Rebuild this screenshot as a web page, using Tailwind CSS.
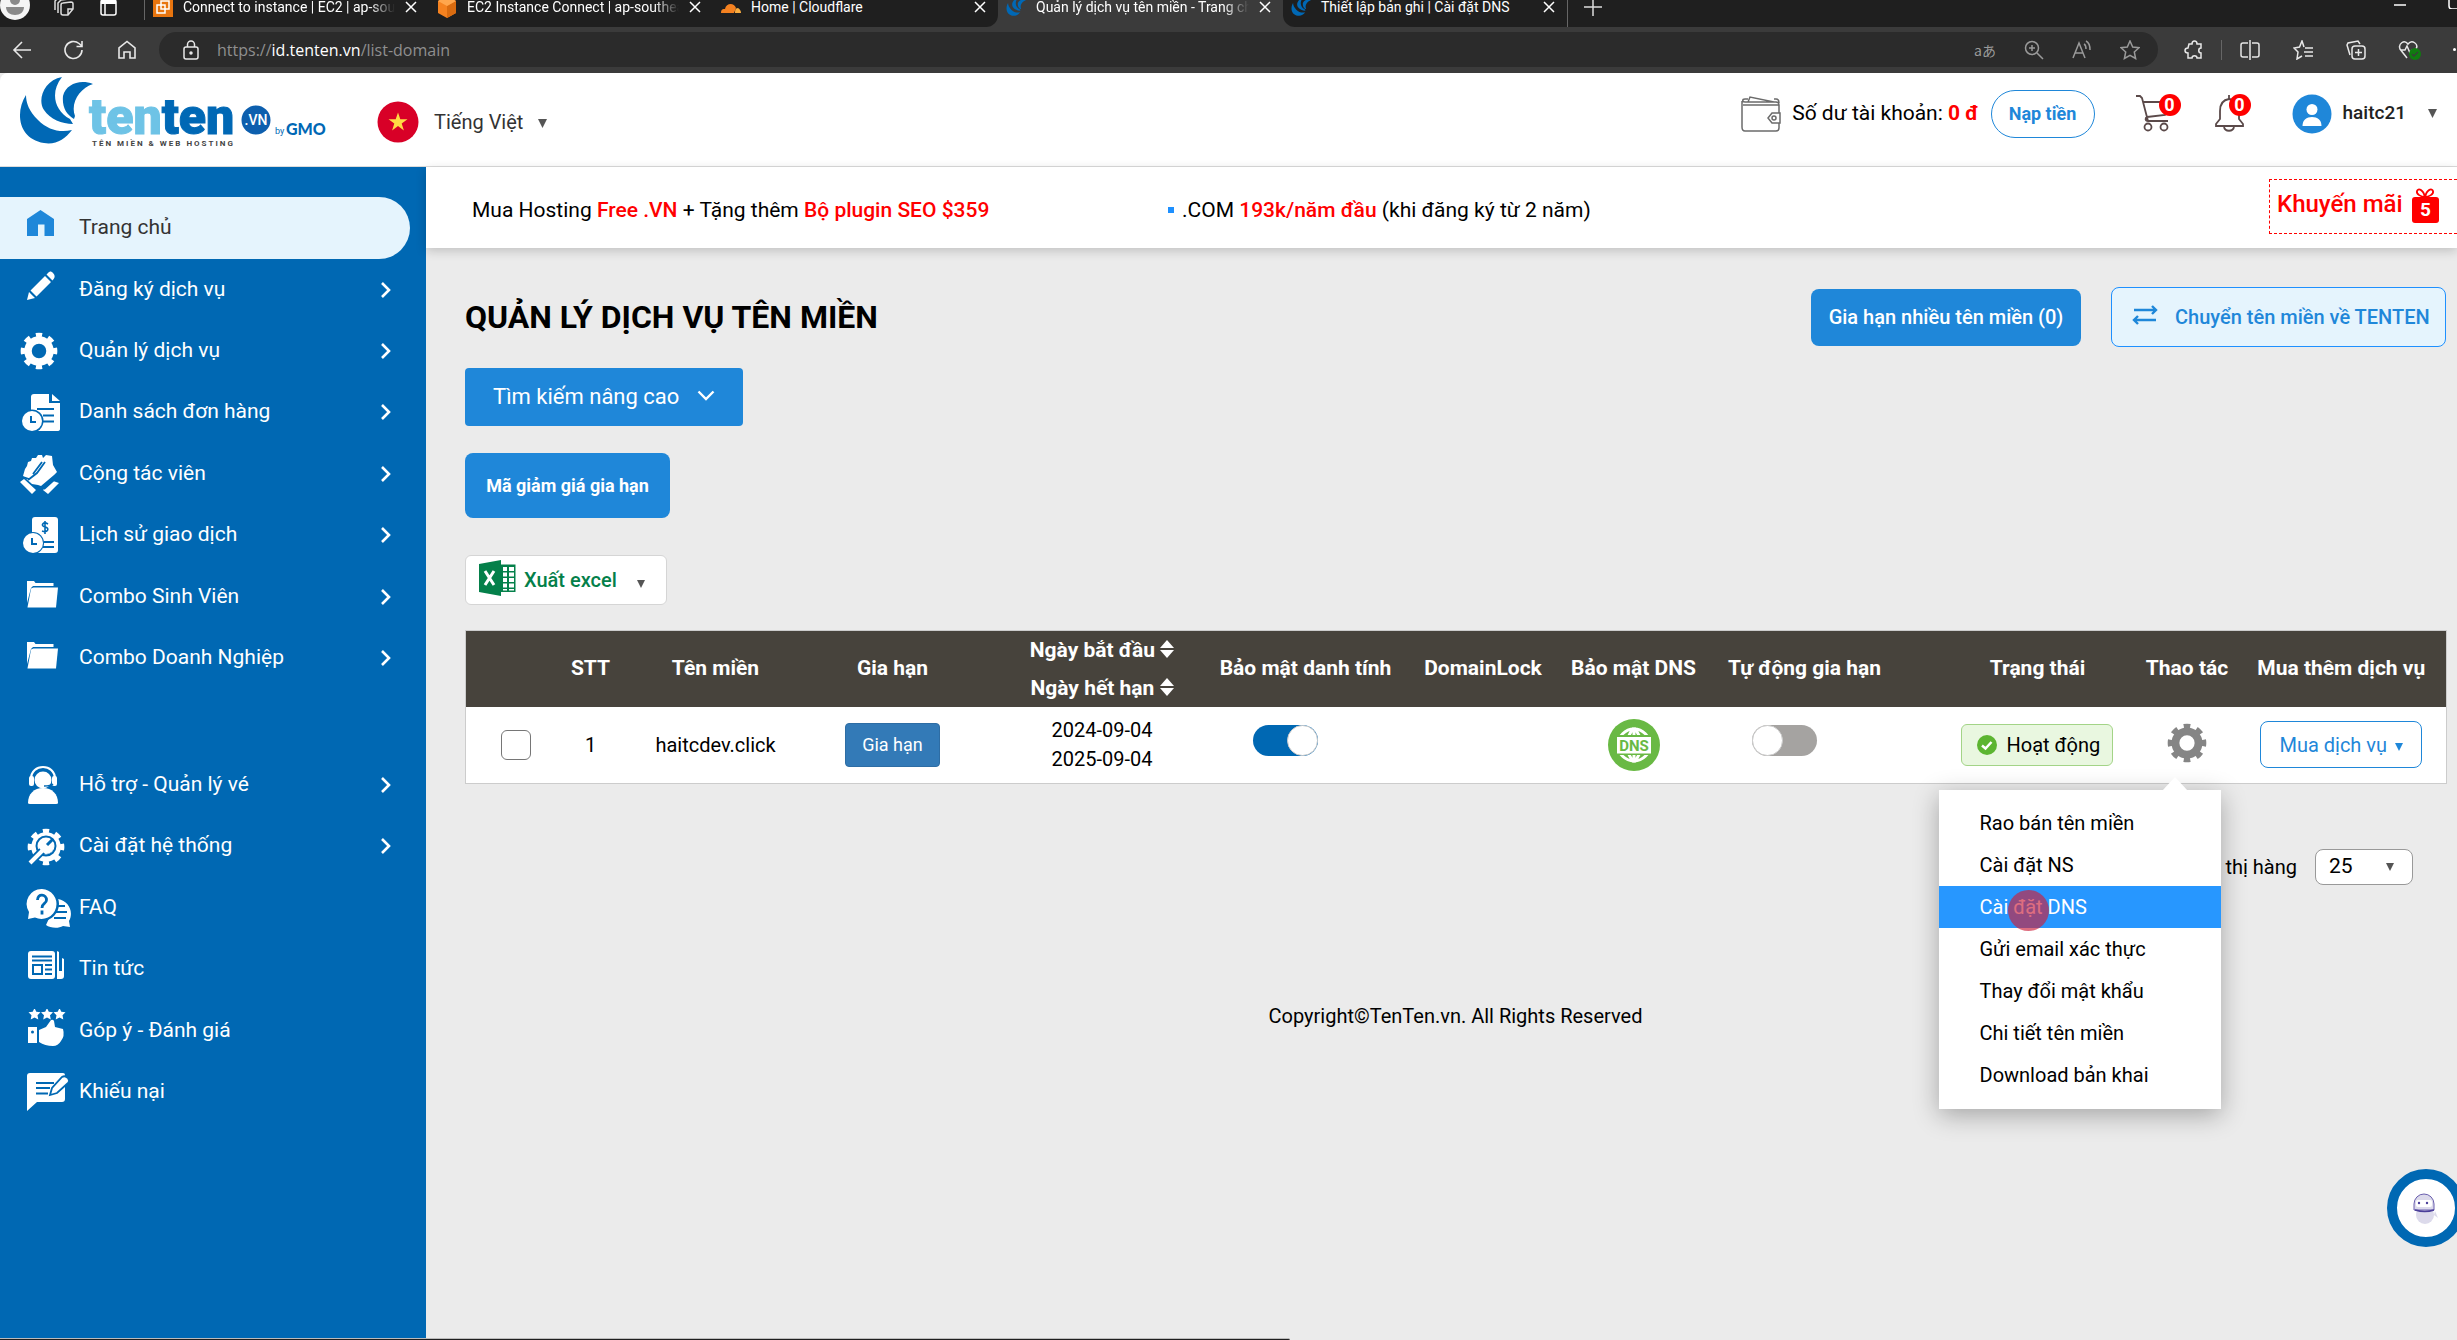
<!DOCTYPE html>
<html lang="vi">
<head>
<meta charset="utf-8">
<title>Quản lý dịch vụ tên miền - Trang chủ</title>
<script src="https://cdn.jsdelivr.net/npm/@tailwindcss/browser@4"></script>
</head>
<body class="flex min-h-screen flex-col overflow-x-hidden bg-[#ebebeb] font-['Roboto',sans-serif] text-xl text-black">

<svg class="hidden" aria-hidden="true">
  <symbol id="chev" viewBox="0 0 12 18"><path d="M2 2l7 7-7 7" fill="none" stroke="currentColor" stroke-width="2.6"/></symbol>
  <symbol id="caret" viewBox="0 0 10 10"><path d="M0 0h10L5 10z" fill="currentColor"/></symbol>
  <symbol id="gear" viewBox="0 0 38 38"><g fill="none" stroke="currentColor"><circle cx="19" cy="19" r="11" stroke-width="7.5"/><circle cx="19" cy="19" r="15.6" stroke-width="5.500" pathLength="16" stroke-dasharray="1 1" stroke-dashoffset=".5"/></g></symbol>
  <symbol id="folder" viewBox="0 0 52 44"><path d="M7 6h7l1.500 2H33.500V11H13L11 13 7 28z" fill="currentColor"/><path d="M13.500 12.500H38L36 32.500H7.500L11 13.500z" fill="currentColor"/></symbol>
  <symbol id="mark" viewBox="18 76 76 68"><path fill="#0068b5" d="M26 95C15 112 18 139 44 143C56 145 65 139 72 130C60 133 48 130 38 120C29 111 26 103 26 95zM62 77C44 80 37 100 44 110C50 119 62 124 73 124L70 119C54 110 50 92 62 77zM93 84C80 79 66 84 63 96C62 107 66 114 74 119L75 116C70 103 80 88 93 84z"/></symbol>
  <symbol id="close" viewBox="0 0 12 12"><path d="M1 1l10 10M11 1L1 11" stroke="currentColor" stroke-width="1.500"/></symbol>
  <symbol id="clock" viewBox="0 0 20 20"><circle cx="10" cy="10" r="10" fill="currentColor"/><path d="M9 5v6h5" fill="none" stroke="#0068b5" stroke-width="2"/></symbol>
  <symbol id="sort" viewBox="0 0 14 18"><path d="M0 8L7 0l7 8zM0 10h14l-7 8z" fill="currentColor"/></symbol>
</svg>

<!-- Browser chrome -->
<div class="bg-[#3b3b3b] text-white">
  <div class="h-[27px] overflow-hidden bg-[#3b3b3b] text-sm">
    <div class="-mt-[13px] flex h-10">
      <div class="flex min-w-0 items-center rounded-br-xl bg-[#1f1f1f]">
        <div class="flex w-[145px] items-center gap-6 border-r border-[#666]">
          <svg class="-mt-1 size-[30px]" viewBox="0 0 30 30"><circle cx="15" cy="15" r="15" fill="#f5f5f5"/><circle cx="15" cy="10" r="5" fill="#8a8a8a"/><path d="M6 17h18c0 5-4 8-9 8s-9-3-9-8z" fill="#8a8a8a"/></svg>
          <svg class="size-5" viewBox="0 0 20 20" fill="none" stroke="#ddd" stroke-width="1.500"><path d="M9 6l8-1q2 0 2 2v5l-5 6H9q-2 0-2-2V8q0-2 2-2zM14 18v-6h5M4 16V6l3-3 8-1M1 13V4l3-3 7-1"/></svg>
          <svg class="size-5" viewBox="0 0 20 20" fill="none" stroke="#fff" stroke-width="1.500"><rect x="3" y="3" width="15" height="15" rx="2"/><path d="M3 5h15" stroke-width="4"/><path d="M7 5v13"/></svg>
        </div>
        <div class="flex h-10 w-[284px] items-center gap-[10px] pl-2 pr-3">
          <svg class="size-5 shrink-0" viewBox="0 0 20 20"><path d="M0 0h20v20H0z" fill="#e8750f"/><g fill="none" stroke="#fff" stroke-width="1.500"><rect x="4" y="8" width="8" height="8"/><rect x="8" y="4" width="8" height="8"/></g></svg>
          <span class="min-w-0 flex-1 overflow-hidden whitespace-nowrap [mask-image:linear-gradient(90deg,#000_88%,transparent)]">Connect to instance | EC2 | ap-southeast</span>
          <svg class="size-3 shrink-0"><use href="#close"/></svg>
        </div>
        <div class="flex h-10 w-[284px] items-center gap-[10px] pl-2 pr-3">
          <svg class="h-6 w-5 shrink-0" viewBox="0 0 20 24"><path d="M10 1l9 5v12l-9 5-9-5V6z" fill="#f58220"/><path d="M10 11v12l9-5V6z" fill="#d96b10"/><path d="M10 1l9 5-9 5-9-5z" fill="#ffa64d"/></svg>
          <span class="min-w-0 flex-1 overflow-hidden whitespace-nowrap [mask-image:linear-gradient(90deg,#000_88%,transparent)]">EC2 Instance Connect | ap-southeast-1</span>
          <svg class="size-3 shrink-0"><use href="#close"/></svg>
        </div>
        <div class="flex h-10 w-[285px] items-center gap-[10px] pl-2 pr-3">
          <svg class="h-4 w-5 shrink-0" viewBox="0 0 20 16"><path d="M0 14c0-4 2-4 4-4 1-6 9-7 11-1l-2 5z" fill="#f48120"/><path d="M14 14c0-2 0-5 3-5 2 1 3 3 3 5z" fill="#faad3f"/></svg>
          <span class="flex-1 whitespace-nowrap">Home | Cloudflare</span>
          <svg class="size-3 shrink-0"><use href="#close"/></svg>
        </div>
      </div>
      <div class="flex w-[285px] items-center gap-[10px] bg-[#3b3b3b] pl-2 pr-3">
        <svg class="size-5 shrink-0"><use href="#mark"/></svg>
        <span class="min-w-0 flex-1 overflow-hidden whitespace-nowrap [mask-image:linear-gradient(90deg,#000_88%,transparent)]">Quản lý dịch vụ tên miền - Trang chủ</span>
        <svg class="size-3 shrink-0"><use href="#close"/></svg>
      </div>
      <div class="flex min-w-0 flex-1 items-center rounded-bl-xl bg-[#1f1f1f]">
        <div class="flex h-10 w-[285px] shrink-0 items-center gap-[10px] border-r border-[#666] pl-2 pr-3">
          <svg class="size-5 shrink-0"><use href="#mark"/></svg>
          <span class="flex-1 whitespace-nowrap">Thiết lập bản ghi | Cài đặt DNS</span>
          <svg class="size-3 shrink-0"><use href="#close"/></svg>
        </div>
        <svg class="ml-4 size-[18px]" viewBox="0 0 18 18"><path d="M9 0v18M0 9h18" stroke="#ddd" stroke-width="1.500"/></svg>
        <svg class="mb-2 ml-auto h-3 w-[63px]" viewBox="0 0 63 12"><path d="M0 8h12" stroke="#fff" stroke-width="1.500"/><path d="M55 0v9q0 3 3 3h5" fill="none" stroke="#fff" stroke-width="1.500"/></svg>
      </div>
    </div>
  </div>
  <div class="flex h-[46px] items-center pb-px font-['Open_Sans','Noto_Sans',sans-serif] text-base">
    <svg class="ml-3 h-5 w-5" viewBox="0 0 20 20" fill="none" stroke="#e8e8e8" stroke-width="1.600"><path d="M19 10H2M10 2l-8 8 8 8"/></svg>
    <svg class="ml-8 h-5 w-5" viewBox="0 0 20 20" fill="none" stroke="#e8e8e8" stroke-width="1.600"><path d="M18 10a8.500 8.500 0 1 1-3-6.500L18 6M18 1v5.500h-5.500"/></svg>
    <svg class="ml-[33px] h-5 w-5" viewBox="0 0 20 20" fill="none" stroke="#e8e8e8" stroke-width="1.600"><path d="M2 18V8l8-6.500L18 8v10h-5v-6H7v6z"/></svg>
    <div class="ml-[22px] flex h-[35px] min-w-0 flex-1 items-center rounded-full bg-[#2b2b2b] pl-[22px] pr-[18px]">
      <svg class="size-5" viewBox="0 0 20 20" fill="none" stroke="#e8e8e8" stroke-width="1.500"><rect x="3" y="7" width="14" height="12" rx="2"/><path d="M6.500 7V4.500a3.500 3.500 0 0 1 7 0V7"/><circle cx="10" cy="13" r="1" fill="#e8e8e8"/></svg>
      <a href="#" class="ml-4 text-[#8f8f8f]">https://<span class="text-white">id.tenten.vn</span>/list-domain</a>
      <div class="ml-auto flex items-center gap-7 text-[#9a9a9a]">
        <span class="font-['Noto_Sans_CJK_JP',sans-serif] text-sm leading-5">aあ</span>
        <svg class="size-5" viewBox="0 0 20 20" fill="none" stroke="currentColor" stroke-width="1.500"><circle cx="8" cy="8" r="6.500"/><path d="M13 13l6 6M8 5v6M5 8h6"/></svg>
        <svg class="size-5" viewBox="0 0 20 20" fill="none" stroke="currentColor" stroke-width="1.500"><path d="M1 18L7 3l6 15M3 13h8M12 4c2 1 2 3 2 5M14 1c4 2 4 6 4 9"/></svg>
        <svg class="size-5" viewBox="0 0 20 20" fill="none" stroke="currentColor" stroke-width="1.500"><path d="M10 1l2.700 6 6.300.7-4.700 4.300 1.300 6.500L10 15.300l-5.600 3.200 1.300-6.500L1 7.700 7.300 7z"/></svg>
      </div>
    </div>
    <div class="ml-[26px] flex items-center text-[#e8e8e8]">
      <svg class="size-5" viewBox="0 0 20 20" fill="none" stroke="currentColor" stroke-width="1.500"><path d="M5 4h3c0-4 5-4 5 0h4v4c-3 0-3 5 0 5v5h-4c0-3-5-3-5 0H4v-5c-4 0-4-5 0-5z"/></svg>
      <span class="ml-[17px] h-5 w-px bg-[#666]"></span>
      <svg class="ml-[18px] size-5" viewBox="0 0 20 20" fill="none" stroke="currentColor" stroke-width="1.500"><path d="M8 3H3a2 2 0 0 0-2 2v10a2 2 0 0 0 2 2h5M12 3h5a2 2 0 0 1 2 2v10a2 2 0 0 1-2 2h-5M10 0v20"/></svg>
      <svg class="ml-[33px] size-5" viewBox="0 0 20 20" fill="none" stroke="currentColor" stroke-width="1.500"><path d="M11 7L9 1 6.500 7 1 8l4 4-1 7 5-3M12 8h8M11 12h9M12 16h8"/></svg>
      <svg class="ml-[33px] size-5" viewBox="0 0 20 20" fill="none" stroke="currentColor" stroke-width="1.500"><rect x="6" y="6" width="13" height="13" rx="3"/><path d="M12.500 9v7M9 12.500h7M4 15L1 5l1-2 10-2 2 3"/></svg>
      <svg class="ml-[32px] h-5 w-6" viewBox="0 0 24 20"><path d="M9 18L2 9C0 4 6-1 10 4c4-5 11 0 8 5M3 10h4l2-4 3 7 2-3" fill="none" stroke="currentColor" stroke-width="1.500"/><circle cx="17" cy="14" r="6" fill="#107c10"/><path d="M14 14l2 2 4-4" fill="none" stroke="#3b3b3b" stroke-width="1.300"/></svg>
      <span class="ml-[31px] mr-px size-[3px] rounded-full bg-white"></span>
    </div>
  </div>
</div>

<!-- Site header -->
<header class="flex h-[94px] items-center rounded-tl-lg border-b border-[#dcdcdc] bg-white pl-[19px] pr-5">
  <a href="#" aria-label="tenten.vn by GMO" class="pb-4">
    <svg class="h-[74px] w-[312px]" viewBox="19 75 312 74">
      <use href="#mark" x="18" y="76" width="76" height="68"/>
      <text x="89" y="134" font-size="50" font-family="Roboto, sans-serif" font-weight="900" fill="#6ec3e6" stroke="#6ec3e6">ten<tspan fill="#0068b5" stroke="#0068b5">ten</tspan></text>
      <circle cx="256" cy="120" r="14.500" fill="#0d5fae"/>
      <text x="256" y="125" font-size="14" text-anchor="middle" fill="#fff" font-family="Roboto, sans-serif" font-weight="500">.VN</text>
      <text x="275" y="134" font-size="9" fill="#0068b5" font-family="Roboto, sans-serif">by</text>
      <text x="286" y="135" font-size="16" fill="#0068b5" font-family="Lato, sans-serif" font-weight="900">GMO</text>
      <text x="92" y="146" font-size="8" letter-spacing="2" fill="#444" font-family="Roboto, sans-serif" font-weight="700">TÊN MIỀN &amp; WEB HOSTING</text>
    </svg>
  </a>
  <button type="button" class="ml-[46px] mt-1 flex items-center text-[#333]">
    <svg class="size-[42px]" viewBox="0 0 42 42"><circle cx="21" cy="21" r="20.500" fill="#d80027"/><path d="M21 11.500l2.300 6.800h7.200l-5.800 4.200 2.200 6.900-5.900-4.300-5.900 4.300 2.200-6.900-5.800-4.200h7.200z" fill="#ffda44"/></svg>
    <span class="ml-[15px]">Tiếng Việt</span>
    <svg class="ml-[15px] mt-1 h-[9px] w-[9px] text-[#555]"><use href="#caret"/></svg>
  </button>
  <div class="ml-auto flex items-center pb-3">
    <svg class="h-9 w-10" viewBox="0 0 40 36" fill="none" stroke="#6b6b6b" stroke-width="1.500"><path d="M1 5v26c0 3 1 4 3 4h31c2 0 3-1 3-3V9c0-2-1-3-3-3H4C1 6 1 3 4 3h3M2 9h36M7 6L9 1l24 5M33 3h2c2 0 3 2 3 4"/><path d="M39 17H31l-4 5 4 5h8z" fill="#fff"/><circle cx="33" cy="22" r="2"/></svg>
    <span class="ml-[11px] whitespace-nowrap text-[21px]">Số dư tài khoản: <b class="font-bold text-[#f00]">0 đ</b></span>
    <button type="button" class="ml-3 h-12 w-[104px] rounded-full border border-[#1f87d9] text-lg font-bold text-[#1f87d9]">Nạp tiền</button>
    <a href="#" aria-label="Giỏ hàng" class="relative ml-10 block w-[46px]">
      <svg class="h-[37px] w-[38px]" viewBox="0 0 38 37" fill="none" stroke="#5b4a4a" stroke-width="1.800"><path d="M1 1h4l2 2 6 23h20M8 7h26l-4 13-18 2M13 26c-3 0-3-3-1-4"/><circle cx="13" cy="32" r="3.500"/><circle cx="29" cy="32" r="3.500"/></svg>
      <span class="absolute -top-px right-0 grid size-[22px] place-items-center rounded-full bg-[#f00] text-lg leading-5 font-bold text-white">0</span>
    </a>
    <a href="#" aria-label="Thông báo" class="relative ml-[34px] block w-9">
      <svg class="h-[37px] w-[30px]" viewBox="0 0 30 37" fill="none" stroke="#5b4a4a" stroke-width="1.800"><path d="M14 0v4C7 5 5 10 5 16v8l-4 5v2h27v-2l-4-5v-8c0-6-2-11-10-12M9 32c1 5 9 5 10 0"/></svg>
      <span class="absolute -top-px right-0 grid size-[22px] place-items-center rounded-full bg-[#f00] text-lg leading-5 font-bold text-white">0</span>
    </a>
    <button type="button" class="ml-[41px] flex items-center">
      <svg class="size-10" viewBox="0 0 40 40"><circle cx="20" cy="20" r="19.500" fill="#1f87d9"/><circle cx="20" cy="15.500" r="5.500" fill="#fff"/><path d="M10.500 32c0-6 4-9 9.500-9s9.500 3 9.500 9z" fill="#fff"/></svg>
      <span class="ml-[11px] text-[19px] font-medium text-[#222]">haitc21</span>
      <svg class="ml-[22px] size-[9px] text-[#555]"><use href="#caret"/></svg>
    </button>
  </div>
</header>

<div class="flex flex-1">
  <!-- Sidebar -->
  <nav class="w-[426px] shrink-0 bg-[#0068b3] pt-[30px] text-[21px] text-white">
    <ul>
      <li class="h-[62px]"><a href="#" class="mr-4 flex h-full items-center rounded-r-full bg-[#e5f4fd] pl-5 text-[#333]"><svg class="mr-[7px] h-11 w-[52px]" viewBox="0 0 52 44"><path d="M20.500 4L34 13v17h-9.500V18.500h-6.500V30H7V13z" fill="#1f87d9"/></svg>Trang chủ</a></li>
      <li class="h-[61px]"><a href="#" class="flex h-full items-center pl-5 pr-[34px]"><svg class="mr-[7px] h-11 w-[52px]" viewBox="0 0 52 44" fill="currentColor"><path d="M7 32l2-8 6 6zM10.500 22.500L25 8l6 6-14.500 14.500zM26.500 6.500L28 5c2-2 3-2 5 0s2 4 1 5.500L32.500 12.500z"/></svg>Đăng ký dịch vụ<svg class="ml-auto h-[18px] w-3"><use href="#chev"/></svg></a></li>
      <li class="h-[61px]"><a href="#" class="flex h-full items-center pl-5 pr-[34px]"><svg class="mr-[7px] h-11 w-[52px]" viewBox="0 0 52 44"><use href="#gear" x="0" y="3" width="38" height="38"/></svg>Quản lý dịch vụ<svg class="ml-auto h-[18px] w-3"><use href="#chev"/></svg></a></li>
      <li class="h-[62px]"><a href="#" class="flex h-full items-center pl-5 pr-[34px]"><svg class="mr-[7px] h-11 w-[52px]" viewBox="0 0 52 44"><path d="M11 7q0-3 3-3h15v9h11v26q0 2-3 2H11zM32 4l8 7h-8z" fill="currentColor"/><path d="M17 19h17M23 25.500h11M22 31.500h12" stroke="#0068b3" stroke-width="1.800"/><circle cx="12" cy="31" r="11.500" fill="#0068b3"/><use href="#clock" x="2" y="21" width="20" height="20"/></svg>Danh sách đơn hàng<svg class="ml-auto h-[18px] w-3"><use href="#chev"/></svg></a></li>
      <li class="h-[61px]"><a href="#" class="flex h-full items-center pl-5 pr-[34px]"><svg class="mr-[7px] h-11 w-[52px]" viewBox="0 0 52 44" fill="currentColor"><path d="M0 30l4-3 12 11-4 4zM23 38l10-9 6 2-11 11zM3 24l2-7 2-3 1-4 3-1 1-3 4 0 2-3 4 0 1 3 3-3 6 1 1 9 4 7-3 3-13 11-3-1-6-1z"/><path d="M8 28l9-7 8-11M3 25l6 2M24 37l11-10M13 22l9-12" fill="none" stroke="#0068b3" stroke-width="1.800"/></svg>Cộng tác viên<svg class="ml-auto h-[18px] w-3"><use href="#chev"/></svg></a></li>
      <li class="h-[62px]"><a href="#" class="flex h-full items-center pl-5 pr-[34px]"><svg class="mr-[7px] h-11 w-[52px]" viewBox="0 0 52 44"><rect x="12" y="4" width="26" height="36" rx="3" fill="currentColor"/><path d="M25 8v13M28 11c-5-3-8 2-3 3s3 6-3 4" fill="none" stroke="#0068b3" stroke-width="1.600"/><path d="M24 29h10M23 34h11" stroke="#0068b3" stroke-width="1.800"/><circle cx="13" cy="30" r="11" fill="#0068b3"/><use href="#clock" x="3" y="20" width="20" height="20"/></svg>Lịch sử giao dịch<svg class="ml-auto h-[18px] w-3"><use href="#chev"/></svg></a></li>
      <li class="h-[61px]"><a href="#" class="flex h-full items-center pl-5 pr-[34px]"><svg class="mr-[7px] h-11 w-[52px]"><use href="#folder"/></svg>Combo Sinh Viên<svg class="ml-auto h-[18px] w-3"><use href="#chev"/></svg></a></li>
      <li class="h-[62px]"><a href="#" class="flex h-full items-center pl-5 pr-[34px]"><svg class="mr-[7px] h-11 w-[52px]"><use href="#folder"/></svg>Combo Doanh Nghiệp<svg class="ml-auto h-[18px] w-3"><use href="#chev"/></svg></a></li>
    </ul>
    <ul class="mt-[65px]">
      <li class="h-[61px]"><a href="#" class="flex h-full items-center pl-5 pr-[34px]"><svg class="mr-[7px] h-11 w-[52px]" viewBox="0 0 52 44"><path d="M8 40c0-9 6-15 15-15s15 6 15 15q0 1-2 1H10q-2 0-2-1z" fill="currentColor"/><circle cx="23" cy="17" r="8.500" fill="currentColor"/><path d="M11 16c0-16 24-16 24 0" fill="none" stroke="currentColor" stroke-width="2.200"/><rect x="9" y="13" width="5" height="10" rx="2" fill="currentColor"/><rect x="32" y="13" width="5" height="10" rx="2" fill="currentColor"/><path d="M33 21c-2 2-4 2-9 2" fill="none" stroke="#0068b3" stroke-width="1.500"/></svg>Hỗ trợ - Quản lý vé<svg class="ml-auto h-[18px] w-3"><use href="#chev"/></svg></a></li>
      <li class="h-[62px]"><a href="#" class="flex h-full items-center pl-5 pr-[34px]"><svg class="mr-[7px] h-11 w-[52px]" viewBox="0 0 52 44"><use href="#gear" x="7" y="4" width="38" height="38"/><circle cx="26" cy="22" r="8" fill="currentColor"/><circle cx="26" cy="22" r="9.500" fill="none" stroke="#0068b3" stroke-width="2"/><path d="M10 39l12-12" stroke="#0068b3" stroke-width="8"/><path d="M10 39l15-15" stroke="currentColor" stroke-width="4"/><path d="M27 21l6-6" stroke="#0068b3" stroke-width="3"/></svg>Cài đặt hệ thống<svg class="ml-auto h-[18px] w-3"><use href="#chev"/></svg></a></li>
      <li class="h-[61px]"><a href="#" class="flex h-full items-center pl-5 pr-[34px]"><svg class="mr-[7px] h-11 w-[52px]" viewBox="0 0 52 44"><path d="M26 39c4 3 12 4 17 1l7 1-1-6c5-9 0-20-11-22z" fill="currentColor"/><path d="M36 20h9M36 26h11M34 32h12" stroke="#0068b3" stroke-width="2"/><circle cx="22" cy="18" r="17" fill="#0068b3"/><path d="M22 3a15 15 0 1 1-7 28.500L8 33l1-7A15 15 0 0 1 22 3z" fill="currentColor"/><path d="M17.500 14c0-7 9-6 9 0 0 4-4.500 3-4.500 8M22 24.500v4" fill="none" stroke="#0068b3" stroke-width="2.800"/></svg>FAQ</a></li>
      <li class="h-[62px]"><a href="#" class="flex h-full items-center pl-5 pr-[34px]"><svg class="mr-[7px] h-11 w-[52px]" viewBox="0 0 52 44"><rect x="8" y="4" width="27" height="28" rx="3" fill="currentColor"/><path d="M37 4l2 1v19h3V11l2 1v17q0 3-3 3h-4z" fill="currentColor"/><path d="M12 9.500h20M12 13.500h20M25 18h7M25 22.500h7M25 27h7" stroke="#0068b3" stroke-width="1.800"/><rect x="13" y="18" width="9" height="9" fill="none" stroke="#0068b3" stroke-width="2"/></svg>Tin tức</a></li>
      <li class="h-[61px]"><a href="#" class="flex h-full items-center pl-5 pr-[34px]"><svg class="mr-[7px] h-11 w-[52px]" viewBox="0 0 52 44" fill="currentColor"><path id="st" d="M14.500-1l1.800 3.800 4.200.5-3 3 .8 4.200-3.800-2-3.800 2 .8-4.200-3-3 4.200-.5z"/><use href="#st" x="12.500"/><use href="#st" x="25"/><path d="M8 18h9v16H8zM19 21l7-3 5-7q2-1 3 1l1 6 8 2q2 7-2 12-3 5-8 5-8 0-14-4z"/><circle cx="12.500" cy="23" r="1.500" fill="#0068b3"/></svg>Góp ý - Đánh giá</a></li>
      <li class="h-[62px]"><a href="#" class="flex h-full items-center pl-5 pr-[34px]"><svg class="mr-[7px] h-11 w-[52px]" viewBox="0 0 52 44"><path d="M7 6q0-3 3-3h33q2 0 2 2v24q0 3-3 3H17L7 41z" fill="currentColor"/><path d="M16 13h18M16 18h14M16 23.500h12" stroke="#0068b3" stroke-width="1.800"/><path d="M30 25l2-7L42 7q3-2 6 1 2 3 0 5L37 23z" fill="currentColor" stroke="#0068b3" stroke-width="1.800"/></svg>Khiếu nại</a></li>
    </ul>
  </nav>

  <div class="flex min-w-0 flex-1 flex-col">
    <!-- Promotions -->
    <div class="flex h-[81px] shrink-0 items-start bg-white pl-[46px] text-[21px] leading-7 shadow-[0_3px_10px_rgba(0,0,0,0.18)]">
      <p class="mt-[29px] w-[696px]">Mua Hosting <b class="font-medium text-[#f00]">Free .VN</b> + Tặng thêm <b class="font-medium text-[#f00]">Bộ plugin SEO $359</b></p>
      <p class="mt-[29px] flex items-center whitespace-pre"><span class="mr-2 size-[6px] bg-[#1e90ff]"></span>.COM <b class="font-medium text-[#f00]">193k/năm đầu</b> (khi đăng ký từ 2 năm)</p>
      <a href="#" class="ml-auto mt-3 flex h-[55px] w-[188px] items-start border border-r-0 border-dashed border-[#f00] pl-[7px] pt-2 text-2xl leading-8 font-medium text-[#f00]">Khuyến mãi
        <svg class="ml-[9px] h-9 w-[27px]" viewBox="0 0 27 36"><path d="M13 9C9 9 4 6 5 3s6-2 8 6c2-8 7-9 8-6s-4 6-8 6z" fill="none" stroke="#f00" stroke-width="1.800"/><rect y="9" width="27" height="26" rx="3" fill="#f00"/><text x="13.500" y="28" text-anchor="middle" font-size="19" font-weight="700" fill="#fff">5</text></svg>
      </a>
    </div>

    <main class="flex-1 pb-6 pl-[39px] pr-[11px] pt-[39px]">
      <div class="flex items-center">
        <h1 class="text-[32px] leading-[60px] font-bold">QUẢN LÝ DỊCH VỤ TÊN MIỀN</h1>
        <button type="button" class="ml-auto h-[57px] w-[270px] rounded-lg bg-[#1f87d9] font-medium text-white">Gia hạn nhiều tên miền (0)</button>
        <button type="button" class="ml-[30px] flex h-[60px] w-[335px] items-center whitespace-nowrap rounded-lg border border-[#1e90ff] bg-[#e5f4fd] pl-5 font-medium text-[#1f87d9]">
          <svg class="mb-1 mr-[17px] h-5 w-[26px]" viewBox="0 0 26 20" fill="none" stroke="currentColor" stroke-width="2.400"><path d="M2 5h22M20 1l4 4-4 4M24 15H2M6 11l-4 4 4 4"/></svg>Chuyển tên miền về TENTEN
        </button>
      </div>
      <button type="button" class="mt-[21px] flex h-[58px] w-[278px] items-center rounded bg-[#1f87d9] pl-7 text-[22px] text-white">Tìm kiếm nâng cao
        <svg class="mb-1 ml-[18px] h-[11px] w-[18px]" viewBox="0 0 18 11"><path d="M1.500 1.500L9 9l7.500-7.500" fill="none" stroke="currentColor" stroke-width="2.400"/></svg>
      </button>
      <button type="button" class="mt-[27px] block h-[65px] w-[205px] rounded-lg bg-[#1f87d9] text-lg font-bold text-white">Mã giảm giá gia hạn</button>
      <button type="button" class="mt-[37px] flex h-[50px] w-[202px] items-center rounded-md border border-[#d5d5d5] bg-white pl-[13px] font-medium text-[#04804a]">
        <svg class="mb-1 h-[36px] w-[37px]" viewBox="0 0 37 36"><path d="M22 4.500h14.500V32H22z" fill="#04804a"/><path d="M24 7h4v4h-4zM30 7h5v4h-5zM24 12.500h4v4h-4zM30 12.500h5v4h-5zM24 18h4v4h-4zM30 18h5v4h-5zM24 23.500h4v4h-4zM30 23.500h5v4h-5zM24 29h4v1.500h-4zM30 29h5v1.500h-5z" fill="#fff"/><path d="M0 4l22-4v36L0 32z" fill="#04804a"/><path d="M6 11l9 14M15 11L6 25" stroke="#fff" stroke-width="3"/></svg>
        <span class="ml-2">Xuất excel</span>
        <svg class="ml-5 mt-2 size-2 text-[#555]"><use href="#caret"/></svg>
      </button>

      <table class="mt-[25px] w-full table-fixed border border-[#ccc] bg-white text-center">
        <colgroup><col class="w-[90px]"><col class="w-[70px]"><col class="w-[180px]"><col class="w-[174px]"><col class="w-[233px]"><col class="w-[186px]"><col class="w-[165px]"><col class="w-[140px]"><col class="w-[202px]"><col class="w-[232px]"><col class="w-[99px]"><col class="w-[210px]"></colgroup>
        <thead class="bg-[#47433c] text-[21px] text-white">
          <tr class="h-[76px] whitespace-nowrap [&>th]:font-bold">
            <th></th><th>STT</th><th>Tên miền</th><th>Gia hạn</th>
            <th class="pl-3 leading-[38px]">Ngày bắt đầu <svg class="-mt-1 inline h-[18px] w-[14px]"><use href="#sort"/></svg><br>Ngày hết hạn <svg class="-mt-1 inline h-[18px] w-[14px]"><use href="#sort"/></svg></th>
            <th>Bảo mật danh tính</th><th class="pl-1">DomainLock</th><th>Bảo mật DNS</th><th>Tự động gia hạn</th><th class="pl-8">Trạng thái</th><th>Thao tác</th><th>Mua thêm dịch vụ</th>
          </tr>
        </thead>
        <tbody>
          <tr class="h-[76px]">
            <td class="pl-[10px]"><input type="checkbox" aria-label="Chọn haitcdev.click" class="mx-auto block size-[30px] appearance-none rounded-md border border-[#767676] bg-white"></td>
            <td>1</td>
            <td>haitcdev.click</td>
            <td><button type="button" class="h-11 w-[95px] rounded border border-[#2e6da4] bg-[#337ab7] text-lg text-white">Gia hạn</button></td>
            <td class="pl-3 leading-[29px]">2024-09-04<br>2025-09-04</td>
            <td class="pb-2 pr-10"><label class="relative mx-auto block h-[31px] w-[65px]"><input type="checkbox" checked aria-label="Bảo mật danh tính" class="peer block h-full w-full appearance-none rounded-full bg-[#a5a3a1] checked:bg-[#0068b3]"><span class="absolute left-0 top-0 size-[31px] rounded-full border border-[#ccc] bg-white peer-checked:left-auto peer-checked:right-0"></span></label></td>
            <td></td>
            <td><svg class="mx-auto size-[52px]" viewBox="0 0 52 52"><circle cx="26" cy="26" r="26" fill="#69b944"/><g fill="none" stroke="#fff" stroke-width="3"><circle cx="26" cy="26" r="16"/><path d="M26 9c-9 9-9 25 0 34M26 9c9 9 9 25 0 34M26 9v34"/></g><rect x="7" y="16" width="38" height="20" fill="#69b944"/><rect x="9" y="18" width="34" height="16.500" fill="#fff"/><text x="26" y="32" text-anchor="middle" font-size="15" font-weight="700" fill="#69b944">DNS</text></svg></td>
            <td class="pb-2 pr-10"><label class="relative mx-auto block h-[31px] w-[65px]"><input type="checkbox" aria-label="Tự động gia hạn" class="peer block h-full w-full appearance-none rounded-full bg-[#a5a3a1] checked:bg-[#0068b3]"><span class="absolute left-0 top-0 size-[31px] rounded-full border border-[#ccc] bg-white peer-checked:left-auto peer-checked:right-0"></span></label></td>
            <td class="pl-[30px]"><span class="mx-auto flex h-[42px] w-[152px] items-center whitespace-nowrap rounded-md border border-[#a3d487] bg-[#e9f7e0] pl-[15px]"><svg class="mr-[10px] size-5 shrink-0" viewBox="0 0 20 20"><circle cx="10" cy="10" r="10" fill="#5cb531"/><path d="M5 10.500l3.500 3 6-6.500" fill="none" stroke="#fff" stroke-width="2.500"/></svg>Hoạt động</span></td>
            <td class="relative pb-1">
              <button type="button" aria-label="Thao tác" class="mx-auto block text-[#858585]"><svg class="size-10"><use href="#gear"/></svg></button>
              <div class="absolute right-4 top-[83px] z-10 w-[282px] bg-white pt-3 pb-[13px] text-left shadow-[0_6px_24px_rgba(0,0,0,0.3)]">
                <svg class="absolute right-[33px] -top-[13px] h-[14px] w-[26px]" viewBox="0 0 26 14"><path d="M0 14L13 0l13 14z" fill="#fff"/></svg>
                <ul class="whitespace-nowrap leading-[42px] [&_a]:block [&_a]:pl-[41px]">
                  <li><a href="#">Rao bán tên miền</a></li>
                  <li><a href="#">Cài đặt NS</a></li>
                  <li class="relative bg-[#2797ff] text-white"><a href="#">Cài đặt DNS</a><span class="absolute left-[69px] top-1 size-[41px] rounded-full bg-[#cc1f3a]/65"></span></li>
                  <li><a href="#">Gửi email xác thực</a></li>
                  <li><a href="#">Thay đổi mật khẩu</a></li>
                  <li><a href="#">Chi tiết tên miền</a></li>
                  <li><a href="#">Download bản khai</a></li>
                </ul>
              </div>
            </td>
            <td><button type="button" class="mx-auto flex h-[47px] w-[162px] items-center justify-center gap-2 rounded-lg border border-[#1f87d9] text-[#1f87d9]">Mua dịch vụ<svg class="mt-1 size-2"><use href="#caret"/></svg></button></td>
          </tr>
        </tbody>
      </table>

      <div class="mt-[65px] flex items-center justify-end pr-[33px]">
        <label for="rows">Hiển thị hàng</label>
        <div class="relative ml-[18px]">
          <select id="rows" class="block h-[36px] w-[98px] appearance-none rounded-lg border border-[#999] bg-white pl-[13px] text-[21px]"><option>25</option><option>50</option><option>100</option></select>
          <svg class="pointer-events-none absolute right-[19px] top-[14px] size-2 text-[#555]"><use href="#caret"/></svg>
        </div>
      </div>
      <footer class="mt-[117px] text-center">Copyright©TenTen.vn. All Rights Reserved</footer>
    </main>
  </div>
</div>

<!-- Chat launcher -->
<button type="button" aria-label="Chat" class="fixed bottom-[93px] -right-2 grid size-[78px] place-items-center rounded-full border-[10px] border-[#0068b3] bg-white">
  <svg class="h-8 w-7" viewBox="0 0 28 32"><circle cx="13" cy="23" r="9" fill="#dcdaeb"/><path d="M2 12a10 10 0 0 1 20 0v6H2z" fill="#dcdaeb" stroke="#6a5fae"/><rect x="4" y="8" width="16" height="7" rx="2" fill="#fff"/><circle cx="7" cy="11" r="1.200" fill="#4b3f9a"/><circle cx="15" cy="11" r="1.200" fill="#4b3f9a"/><path d="M3 18q10 3 19 0" fill="none" stroke="#4b3f9a" stroke-width="1.500"/><path d="M23 19l3 7-4-3z" fill="#dcdaeb"/></svg>
</button>

<!-- Top edge of the browser's status bar -->
<div class="fixed bottom-0 left-0 h-[2px] w-[1290px] rounded-tr border-t border-[#bbb] bg-[#1f1f1f]"></div>
</body>
</html>
